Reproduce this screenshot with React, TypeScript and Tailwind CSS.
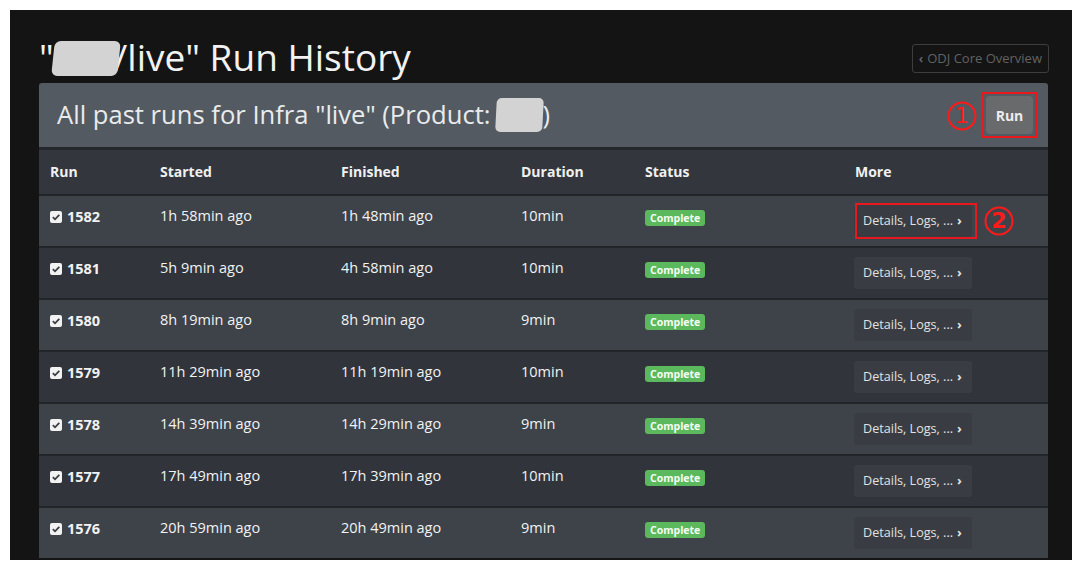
import React from "react";

const rows = [
  { id: 1582, s: "1h 58min ago", f: "1h 48min ago", d: "10min" },
  { id: 1581, s: "5h 9min ago", f: "4h 58min ago", d: "10min" },
  { id: 1580, s: "8h 19min ago", f: "8h 9min ago", d: "9min" },
  { id: 1579, s: "11h 29min ago", f: "11h 19min ago", d: "10min" },
  { id: 1578, s: "14h 39min ago", f: "14h 29min ago", d: "9min" },
  { id: 1577, s: "17h 49min ago", f: "17h 39min ago", d: "10min" },
  { id: 1576, s: "20h 59min ago", f: "20h 49min ago", d: "9min" },
];

function CheckSquare() {
  return (
    <svg width="12" height="12" viewBox="0 0 12 12" className="shrink-0">
      <rect x="0" y="0" width="12" height="12" rx="2" fill="#f2f2f2" />
      <path d="M2.8 6.2 L5 8.3 L9.3 3.8" fill="none" stroke="#3a3e44" strokeWidth="1.8" />
    </svg>
  );
}

function Circled({ n, hand }: { n: string; hand?: boolean }) {
  return (
    <svg width="30" height="30" viewBox="0 0 30 30">
      <circle cx="15" cy="15" r="13.5" fill="none" stroke="#ff1a1a" strokeWidth="2" />
      <text
        x="15"
        y="22"
        textAnchor="middle"
        fill="#ff1a1a"
        fontSize={hand ? 22 : 21}
        fontWeight={hand ? 700 : 400}
        fontFamily="'DejaVu Sans', sans-serif"
      >
        {n}
      </text>
    </svg>
  );
}

export default function App() {
  return (
    <div className="w-[1082px] h-[570px] bg-white p-[10px]" style={{ fontFamily: "'Open Sans', sans-serif" }}>
      <div className="h-[550px] bg-[#141414] pl-[29px] pr-[24px] overflow-hidden">
        <div className="flex justify-between items-end h-[73px]">
          <h1 className="text-[37px] leading-[44px] text-[#f2f2f2] font-normal mb-[4px] flex items-center">
            <span>"</span>
            <span className="relative z-10 inline-block w-[66px] h-[35px] bg-[#d3d3d3] rounded-[6px] -skew-x-6 ml-[-1px] mr-[-5px] translate-y-[1px]"></span>
            <span>/live" Run History</span>
          </h1>
          <div className="mb-[10px] h-[29px] border border-[#3d3d3d] rounded-[3px] px-[6px] flex items-center text-[13px] text-[#626262] mr-[-1px]">
            <span className="text-[12px] font-bold mr-[4px]">‹</span>
            <span>ODJ Core Overview</span>
          </div>
        </div>

        <div className="bg-[#535a62] h-[64px] flex items-center justify-between pl-[18px] pr-[11px] rounded-t-[3px]">
          <div className="text-[25.6px] text-[#e9ebec] flex items-center">
            <span>All past runs for Infra "live" (Product:</span>
            <span className="inline-block w-[47px] h-[34px] bg-[#d3d3d3] rounded-[5px] ml-[5px] -skew-x-3"></span>
            <span>)</span>
          </div>
          <div className="flex items-center">
            <div className="mr-[5px] mt-[2px]">
              <Circled n="1" />
            </div>
            <div className="border-2 border-[#e8181c] p-[2px]">
              <div className="w-[47px] h-[38px] bg-[#686a6c] rounded-[4px] flex items-center justify-center text-[14px] font-bold text-[#ececec]">
                Run
              </div>
            </div>
          </div>
        </div>

        <div className="h-[3px] bg-[#24272b]" />
        <div className="grid grid-cols-[110px_181px_180px_124px_210px_1fr] pl-[11px] h-[44px] items-center bg-[#33373d] text-[14px] font-bold text-[#f0f0f0]">
          <div className="-mt-[2px]">Run</div>
          <div className="-mt-[2px]">Started</div>
          <div className="-mt-[2px]">Finished</div>
          <div className="-mt-[2px]">Duration</div>
          <div className="-mt-[2px]">Status</div>
          <div className="-mt-[2px]">More</div>
        </div>

        {rows.map((r, i) => (
          <div key={r.id}>
            <div className="h-[2px] bg-[#222529]" />
            <div
              className={`grid grid-cols-[110px_181px_180px_124px_210px_1fr] pl-[11px] h-[50px] items-start text-[14.5px] font-medium text-[#f2f2f2] ${
                i % 2 === 0 ? "bg-[#3e434a]" : "bg-[#31353b]"
              }`}
            >
              <div className="flex items-center gap-[5px] pt-[10px]">
                <CheckSquare />
                <span className="font-bold">{r.id}</span>
              </div>
              <div className="pt-[9px]">{r.s}</div>
              <div className="pt-[9px]">{r.f}</div>
              <div className="pt-[9px]">{r.d}</div>
              <div className="pt-[14px] flex">
                <span className="flex items-center h-[16px] px-[5px] rounded-[3px] bg-[#5cb85c] text-[10.5px] font-bold text-[#f4fff4] leading-none">
                  Complete
                </span>
              </div>
              <div className="pt-[9px] relative">
                <div className="inline-flex items-center h-[32px] w-[118px] pl-[9px] rounded-[3px] bg-[#393d43] text-[12.6px] font-normal text-[#e2e2e2] ml-[-1px] whitespace-nowrap">
                  Details, Logs, ...
                  <span className="ml-[4px] text-[13px] font-bold">›</span>
                </div>
                {i === 0 && (
                  <>
                    <div className="absolute left-[0px] top-[7px] w-[122px] h-[36px] border-2 border-[#e8181c]" />
                    <div className="absolute left-[129px] top-[10px]">
                      <Circled n="2" hand />
                    </div>
                  </>
                )}
              </div>
            </div>
          </div>
        ))}
      </div>
    </div>
  );
}
